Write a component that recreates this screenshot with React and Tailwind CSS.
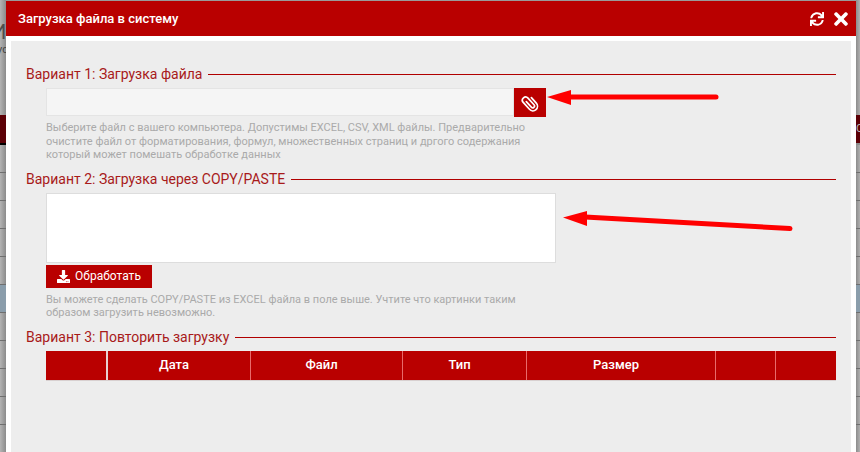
import { FaSync, FaTimes, FaDownload } from 'react-icons/fa';

const rowLines = [0, 1, 2, 3, 4, 5, 6, 7, 8, 9, 10];

// dimmed page that peeks out on either side of the modal
function SideStrip({ side }) {
  const left = side === 'left';
  return (
    <div className={`${left ? 'w-[6px] bg-gradient-to-r from-[#b4b4b4] to-[#8c8c8c]' : 'w-[4px] bg-gradient-to-r from-[#8c8c8c] to-[#b0b0b0]'} shrink-0 h-full overflow-hidden flex flex-col`}>
      <div className="h-[115px] shrink-0 overflow-hidden">
        {left && (
          <>
            <div className="mt-[22px] -ml-[8px] text-[20px] leading-[20px] text-[#4d4d4d] whitespace-nowrap">И</div>
            <div className="mt-[2px] -ml-[3px] text-[11px] leading-[12px] text-[#444] whitespace-nowrap">ус</div>
          </>
        )}
      </div>
      <div className="h-[28px] shrink-0 bg-[#5c0006] overflow-hidden text-[11px] leading-[28px] text-[#bbb] whitespace-nowrap">{left ? '' : 'О'}</div>
      <div className={`h-[2px] shrink-0 ${left ? 'bg-black' : 'bg-[#8c8c8c]'}`} />
      {rowLines.map(i => (
        <div key={i} className={`h-[28px] shrink-0 border-b border-[#6f6f6f] ${i === 5 ? 'bg-[#8a9dab]' : ''}`} />
      ))}
    </div>
  );
}

function Legend({ children }) {
  return (
    <div className="flex items-center gap-[6px] pl-[15px] pr-[15px] h-[18px] text-[14px] text-[#a81a1a]">
      <span className="whitespace-nowrap">{children}</span>
      <div className="flex-1 h-px bg-[#b00000]" />
    </div>
  );
}

function Help({ children }) {
  return <p className="ml-[35px] text-[11px] leading-[13.5px] text-[#aaaaaa]">{children}</p>;
}

function ClipIcon() {
  return (
    <svg width="20" height="20" viewBox="0 0 20 20" fill="none" stroke="currentColor" strokeWidth="1.7" strokeLinecap="round">
      <path d="M8.2 6.5v7.5a1.8 1.8 0 0 0 3.6 0V5a3.2 3.2 0 0 0-6.4 0v9.3a4.6 4.6 0 0 0 9.2 0V7" transform="rotate(-42 10 10)" />
    </svg>
  );
}

const columns = ['', 'Дата', 'Файл', 'Тип', 'Размер', '', ''];

export default function App() {
  return (
    <div className="relative w-[860px] h-[452px] overflow-hidden flex bg-[#9a9a9a] font-['Roboto',sans-serif]">
      <SideStrip side="left" />

      <div className="w-[850px] shrink-0 h-full pt-px flex flex-col">
        <div className="h-[35px] shrink-0 bg-[#b90000] flex items-center justify-between pl-[12px] pr-[5px] text-white">
          <span className="text-[13px] font-medium">Загрузка файла в систему</span>
          <div className="flex items-center gap-[7px]">
            <FaSync size={14} />
            <FaTimes size={20} />
          </div>
        </div>

        <div className="flex-1 bg-white px-[5px] pt-[5px] min-h-0">
          <div className="h-full bg-[#ededed] pt-[24px]">
            <Legend>Вариант 1: Загрузка файла</Legend>

            <div className="mt-[5px] ml-[35px] flex h-[29px]">
              <div className="w-[468px] h-[28px] bg-[#f5f5f5] border border-[#e4e4e4]" />
              <div className="w-[32px] bg-[#b90000] flex items-center justify-center text-white">
                <ClipIcon />
              </div>
            </div>

            <div className="mt-[4px]">
              <Help>
                Выберите файл с вашего компьютера. Допустимы EXCEL, CSV, XML файлы. Предварительно<br />
                очистите файл от форматирования, формул, множественных страниц и дргого содержания<br />
                который может помешать обработке данных
              </Help>
            </div>

            <div className="mt-[9px]">
              <Legend>Вариант 2: Загрузка через COPY/PASTE</Legend>
            </div>

            <div className="mt-[4px] ml-[35px] w-[510px] h-[70px] bg-white border border-[#dddddd]" />

            <div className="mt-[2px] ml-[35px] w-[106px] h-[23px] bg-[#b90000] text-white flex items-center justify-center gap-[5px] text-[12px]">
              <FaDownload size={13} />
              <span>Обработать</span>
            </div>

            <div className="mt-[5px]">
              <Help>
                Вы можете сделать COPY/PASTE из EXCEL файла в поле выше. Учтите что картинки таким<br />
                образом загрузить невозможно.
              </Help>
            </div>

            <div className="mt-[9px]">
              <Legend>Вариант 3: Повторить загрузку</Legend>
            </div>

            <div className="mt-[4px] ml-[35px] w-[790px] h-[30px] grid grid-cols-[62px_143px_152px_124px_189px_60px_60px] bg-[#b90000] border-b border-[#d8d0d0] text-white text-[13px] font-medium">
              {columns.map((c, i) => (
                <div
                  key={i}
                  className={`flex items-center justify-center pr-[10px] border-r ${i === 0 ? 'border-[#e8d0d0] border-r-2' : i === 6 ? 'border-transparent' : 'border-[#e86a6a]'}`}
                >
                  {c}
                </div>
              ))}
            </div>
          </div>
        </div>
      </div>

      <SideStrip side="right" />

      {/* annotation arrows drawn on top of the screenshot */}
      <svg className="absolute inset-0 pointer-events-none" width="860" height="452" fill="#ff0000" stroke="none">
        <path d="M570 97 L716 97" stroke="#ff0000" strokeWidth="5" strokeLinecap="round" fill="none" />
        <path d="M547 97 L571 90 L571 105 Z" />
        <path d="M585 217 L790 228.5" stroke="#ff0000" strokeWidth="5" strokeLinecap="round" fill="none" />
        <path d="M563 217.5 L587 211 L587 226 Z" />
      </svg>
    </div>
  );
}
